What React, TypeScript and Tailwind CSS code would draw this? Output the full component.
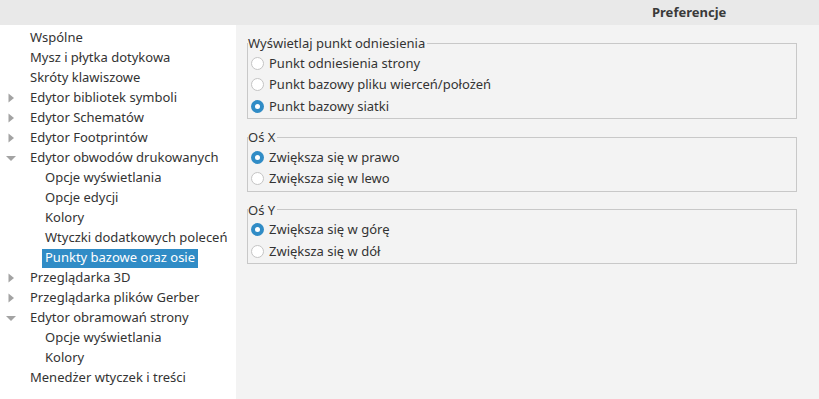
import React from "react";

type Item = { label: string; level: 0 | 1; arrow?: "right" | "down"; selected?: boolean };

const items: Item[] = [
  { label: "Wspólne", level: 0 },
  { label: "Mysz i płytka dotykowa", level: 0 },
  { label: "Skróty klawiszowe", level: 0 },
  { label: "Edytor bibliotek symboli", level: 0, arrow: "right" },
  { label: "Edytor Schematów", level: 0, arrow: "right" },
  { label: "Edytor Footprintów", level: 0, arrow: "right" },
  { label: "Edytor obwodów drukowanych", level: 0, arrow: "down" },
  { label: "Opcje wyświetlania", level: 1 },
  { label: "Opcje edycji", level: 1 },
  { label: "Kolory", level: 1 },
  { label: "Wtyczki dodatkowych poleceń", level: 1 },
  { label: "Punkty bazowe oraz osie", level: 1, selected: true },
  { label: "Przeglądarka 3D", level: 0, arrow: "right" },
  { label: "Przeglądarka plików Gerber", level: 0, arrow: "right" },
  { label: "Edytor obramowań strony", level: 0, arrow: "down" },
  { label: "Opcje wyświetlania", level: 1 },
  { label: "Kolory", level: 1 },
  { label: "Menedżer wtyczek i treści", level: 0 },
];

function Arrow({ dir }: { dir: "right" | "down" }) {
  return dir === "right" ? (
    <svg width="16" height="20" viewBox="0 0 16 20">
      <path d="M8.5 5.5 L14 10 L8.5 14.5 Z" fill="#a3a3a3" />
    </svg>
  ) : (
    <svg width="16" height="20" viewBox="0 0 16 20">
      <path d="M6 8 L16 8 L11 13 Z" fill="#a3a3a3" />
    </svg>
  );
}

function Radio({ checked }: { checked?: boolean }) {
  return checked ? (
    <span className="flex h-[13px] w-[13px] items-center justify-center rounded-full bg-[#308cc6]">
      <span className="h-[5px] w-[5px] rounded-full bg-white" />
    </span>
  ) : (
    <span className="h-[13px] w-[13px] rounded-full border border-[#c4c4c4] bg-white" />
  );
}

function Group({ title, options, first }: { title: string; options: { label: string; checked?: boolean }[]; first?: boolean }) {
  return (
    <fieldset className={`border border-[#c8c8c8] px-0 pb-[1px] ${first ? "" : "mt-[10px]"}`}>
      <legend className="px-0 pr-[2px] text-[13px] leading-[16px] text-[#333333]">{title}</legend>
      <div className="flex flex-col pt-[1.5px]">
        {options.map((o) => (
          <div key={o.label} className="flex h-[21.5px] items-center gap-[5px] pl-[3px]">
            <Radio checked={o.checked} />
            <span className="text-[13px] text-[#333333]">{o.label}</span>
          </div>
        ))}
      </div>
    </fieldset>
  );
}

export default function App() {
  return (
    <div className="flex h-[399px] w-[819px] flex-col overflow-hidden bg-[#f3f3f3]" style={{ fontFamily: '"Noto Sans", "Open Sans", sans-serif' }}>
      <div className="flex h-[25px] shrink-0 items-center bg-[#e9e9e9] pl-[652px]">
        <span className="text-[13px] font-bold text-[#3a3a3a]">Preferencje</span>
      </div>
      <div className="flex flex-1">
        <div className="flex w-[236px] shrink-0 flex-col bg-white pt-[3px]">
          {items.map((it, i) => (
            <div key={i} className="flex h-[20px] items-center">
              <div className="w-[30px] shrink-0">{it.arrow && <Arrow dir={it.arrow} />}</div>
              {it.level === 1 && <div className="w-[15px] shrink-0" />}
              <span
                className={`-ml-[3px] flex h-[19px] items-center px-[3px] text-[13px] ${
                  it.selected ? "bg-[#308cc6] text-white" : "text-[#333333]"
                }`}
              >
                {it.label}
              </span>
            </div>
          ))}
        </div>
        <div className="flex flex-1 flex-col pl-[11px] pr-[22px] pt-[10px]">
          <Group
            first
            title="Wyświetlaj punkt odniesienia"
            options={[
              { label: "Punkt odniesienia strony" },
              { label: "Punkt bazowy pliku wierceń/położeń" },
              { label: "Punkt bazowy siatki", checked: true },
            ]}
          />
          <Group
            title="Oś X"
            options={[{ label: "Zwiększa się w prawo", checked: true }, { label: "Zwiększa się w lewo" }]}
          />
          <Group
            title="Oś Y"
            options={[{ label: "Zwiększa się w górę", checked: true }, { label: "Zwiększa się w dół" }]}
          />
        </div>
      </div>
    </div>
  );
}
